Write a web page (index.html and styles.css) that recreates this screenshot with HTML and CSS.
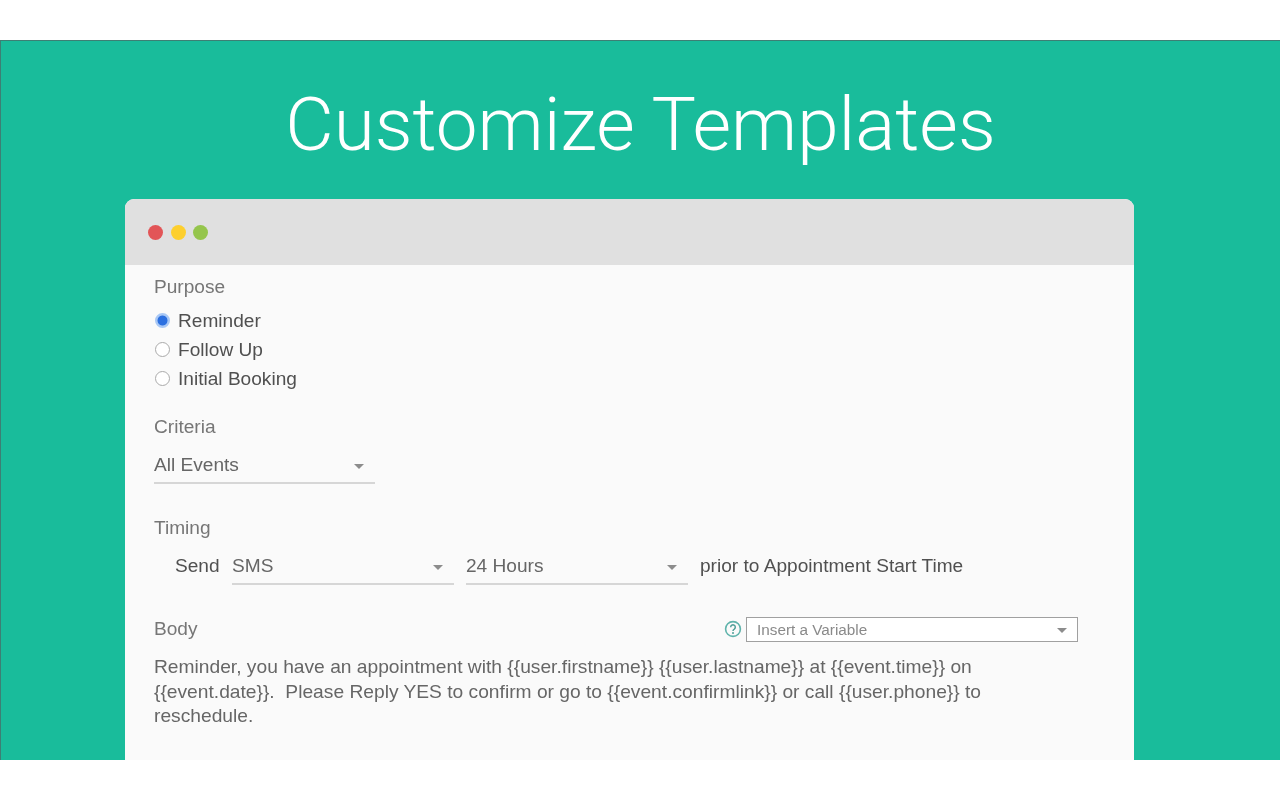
FILE: index.html
```html
<!DOCTYPE html>
<html lang="en">
<head>
<meta charset="utf-8">
<title>Customize Templates</title>
<link rel="stylesheet" href="styles.css">
</head>
<body>
<main class="stage">
  <h1 class="headline">Customize Templates</h1>
  <section class="window">
    <header class="titlebar">
      <span class="dot dot-red"></span>
      <span class="dot dot-yellow"></span>
      <span class="dot dot-green"></span>
    </header>
    <div class="content">
      <div class="label label-purpose">Purpose</div>
      <div class="radios">
        <div class="radio-row"><span class="radio radio-on"></span><span>Reminder</span></div>
        <div class="radio-row"><span class="radio"></span><span>Follow Up</span></div>
        <div class="radio-row"><span class="radio"></span><span>Initial Booking</span></div>
      </div>
      <div class="label label-criteria">Criteria</div>
      <div class="select select-criteria"><span>All Events</span><span class="caret"></span></div>
      <div class="label label-timing">Timing</div>
      <div class="timing-row">
        <span class="send">Send</span>
        <div class="select select-sms"><span>SMS</span><span class="caret"></span></div>
        <div class="select select-hours"><span>24 Hours</span><span class="caret"></span></div>
        <span class="prior">prior to Appointment Start Time</span>
      </div>
      <div class="body-head">
        <div class="label">Body</div>
        <div class="variable-group">
          <svg class="help" viewBox="0 0 18 18" width="18" height="18" aria-hidden="true">
            <circle cx="9" cy="9" r="7.4" fill="none" stroke="#5fb3ab" stroke-width="1.6"/>
            <path d="M6.7 7.2a2.3 2.3 0 1 1 3.6 1.9c-.8.5-1.3.9-1.3 1.9" fill="none" stroke="#4f9f98" stroke-width="1.5"/>
            <circle cx="9" cy="13" r="1" fill="#4f9f98"/>
          </svg>
          <div class="variable-select"><span>Insert a Variable</span><span class="caret"></span></div>
        </div>
      </div>
      <p class="message">Reminder, you have an appointment with {{user.firstname}} {{user.lastname}} at {{event.time}} on<br>{{event.date}}.&nbsp; Please Reply YES to confirm or go to {{event.confirmlink}} or call {{user.phone}} to<br>reschedule.</p>
    </div>
  </section>
</main>
</body>
</html>
```

FILE: styles.css
```css
* { box-sizing: border-box; }
html, body { margin: 0; padding: 0; background: #fff; }
body { height: 800px; overflow: hidden; font-family: "Liberation Sans", Arial, sans-serif; }

.stage {
  margin-top: 40px;
  height: 720px;
  overflow: hidden;
  background: #19bc9b;
  border-top: 1px solid #3d7f74;
  border-left: 1px solid #3d7f74;
}

.headline {
  margin: 0;
  padding-top: 41px;
  height: 158px;
  text-align: center;
  font: 300 74.6px/86px Roboto, sans-serif;
  color: #fff;
}

.window {
  width: 1009px;
  height: 600px;
  margin-left: 124px;
  border-radius: 9px 9px 0 0;
  overflow: hidden;
  background: #fafafa;
}

.titlebar {
  height: 66px;
  padding-left: 23px;
  display: flex;
  align-items: center;
  gap: 7.5px;
  background: #e0e0e0;
}
.dot { width: 15px; height: 15px; border-radius: 50%; filter: blur(0.4px); }
.dot-red { background: #e25557; }
.dot-yellow { background: #fdcf2e; }
.dot-green { background: #95c54c; }

.content { padding: 0 29px; font-size: 19.1px; color: #555; filter: blur(0.45px); }

.label { color: #767676; line-height: 22px; }
.label-purpose { margin-top: 11px; }
.label-criteria { margin-top: 23px; }
.label-timing { margin-top: 33px; }

.radios { margin-top: 8px; }
.radio-row {
  height: 29px;
  display: flex;
  align-items: center;
  gap: 8px;
  color: #505050;
  padding-left: 1px;
}
.radio {
  width: 15px;
  height: 15px;
  border-radius: 50%;
  border: 1.5px solid #a9a9a9;
  background: #fff;
}
.radio-on {
  border: 2px solid #a9c8f5;
  background: radial-gradient(circle, #2b6fe0 0 4.5px, #a9c8f5 5.5px);
}

.select {
  height: 36px;
  display: flex;
  align-items: center;
  justify-content: space-between;
  padding-right: 11px;
  border-bottom: 2px solid #d6d6d6;
  color: #666;
}
.select-criteria { width: 221px; margin-top: 10px; }

.caret {
  width: 0;
  height: 0;
  border-left: 5px solid transparent;
  border-right: 5px solid transparent;
  border-top: 5px solid #8c8c8c;
  margin-top: 2px;
}

.timing-row { display: flex; align-items: center; margin-top: 10px; }
.send { margin-left: 21px; margin-top: -2px; width: 57px; color: #505050; }
.select-sms { width: 222px; }
.select-hours { width: 222px; margin-left: 12px; }
.prior { margin-left: 12px; margin-top: -2px; color: #505050; }

.body-head {
  display: flex;
  align-items: center;
  justify-content: space-between;
  margin-top: 30px;
  width: 924px;
}
.variable-group { display: flex; align-items: center; gap: 4px; }
.help { display: block; }
.variable-select {
  width: 332px;
  height: 25px;
  margin-top: 2px;
  display: flex;
  align-items: center;
  justify-content: space-between;
  padding: 0 10px;
  background: #fff;
  border: 1.5px solid #a0a0a0;
  font-size: 15.3px;
  color: #8a8a8a;
}

.message {
  margin: 13px 0 0;
  font-size: 19.22px;
  line-height: 24.5px;
  color: #666;
  white-space: nowrap;
}
```
